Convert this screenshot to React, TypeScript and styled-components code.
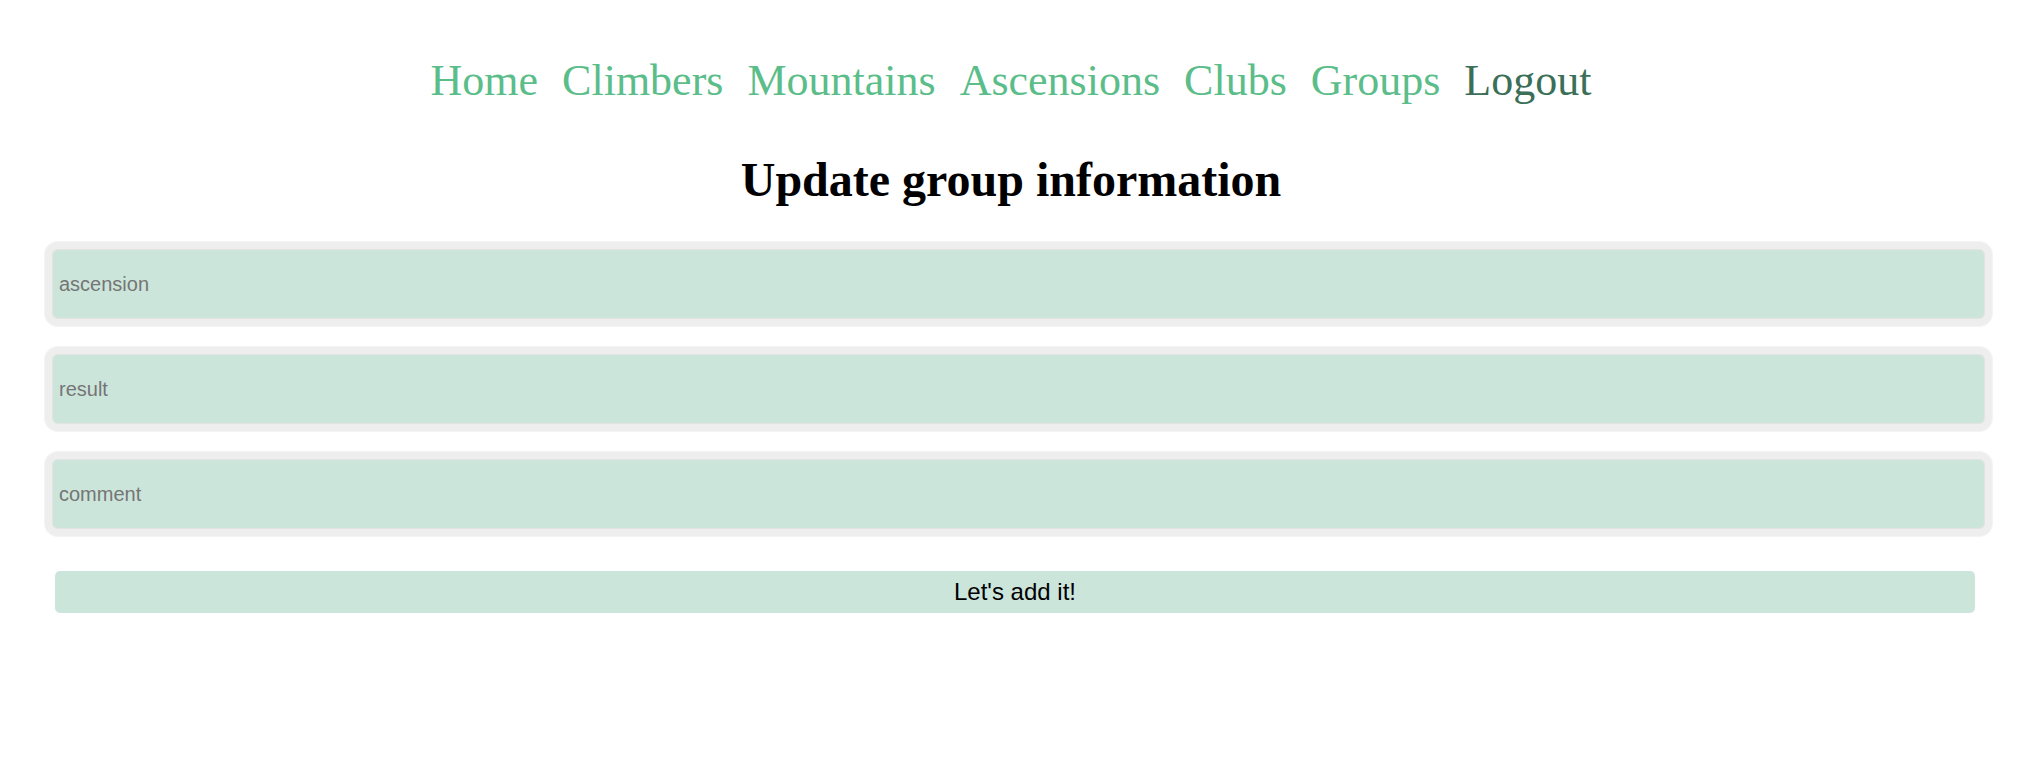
import React from "react";
import styled, { createGlobalStyle } from "styled-components";

const GlobalStyle = createGlobalStyle`
  html, body {
    margin: 0;
    padding: 0;
    background: #ffffff;
  }
  body {
    font-family: "Liberation Serif", "Times New Roman", serif;
  }
`;

const Page = styled.div`
  padding-top: 56px;
`;

const Nav = styled.nav`
  display: flex;
  justify-content: center;
  gap: 24px;
  font-family: "Liberation Serif", "Times New Roman", serif;
  font-size: 44px;
  line-height: 50px;
`;

const NavLink = styled.a<{ $active?: boolean }>`
  color: ${(p) => (p.$active ? "#3b6f57" : "#5bbd89")};
  text-decoration: none;
  cursor: pointer;
`;

const Title = styled.h1`
  margin: 46px 0 0;
  text-align: center;
  font-family: "Liberation Serif", "Times New Roman", serif;
  font-weight: bold;
  font-size: 48px;
  line-height: 56px;
  color: #000;
`;

const Form = styled.form`
  display: flex;
  flex-direction: column;
  gap: 21px;
  margin: 34px 30px 0 45px;
`;

const Field = styled.input`
  box-sizing: border-box;
  width: 100%;
  height: 84px;
  border: 7px solid #eeeeee;
  border-radius: 13px;
  background: #cce5db;
  padding: 0 7px;
  font-family: "Liberation Sans", Arial, sans-serif;
  font-size: 20px;
  color: #222;
  outline: none;
  box-shadow: 0 0 0 1px #f4f4f4, inset 0 0 1px 1px #e4e4e4;
  &::placeholder {
    color: #757575;
  }
`;

const Submit = styled.button`
  box-sizing: border-box;
  height: 42px;
  margin: 14px 17px 0 10px;
  border: none;
  border-radius: 5px;
  background: #cce5db;
  font-family: "Liberation Sans", Arial, sans-serif;
  font-size: 24px;
  color: #000;
  cursor: pointer;
`;

const links = ["Home", "Climbers", "Mountains", "Ascensions", "Clubs", "Groups"];

export default function App() {
  return (
    <>
      <GlobalStyle />
      <Page>
        <Nav>
          {links.map((l) => (
            <NavLink key={l}>{l}</NavLink>
          ))}
          <NavLink $active>Logout</NavLink>
        </Nav>
        <Title>Update group information</Title>
        <Form onSubmit={(e) => e.preventDefault()}>
          <Field placeholder="ascension" />
          <Field placeholder="result" />
          <Field placeholder="comment" />
          <Submit type="submit">Let's add it!</Submit>
        </Form>
      </Page>
    </>
  );
}
